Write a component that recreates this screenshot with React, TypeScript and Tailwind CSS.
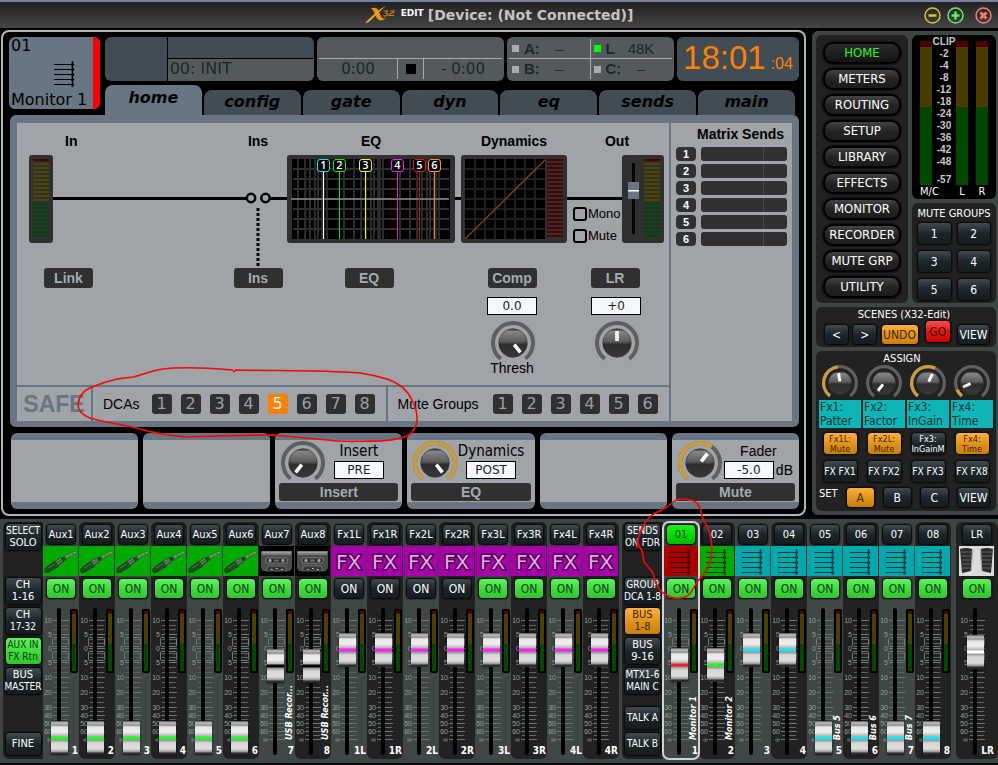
import React, { useId, useState } from 'react';
import clsx from 'clsx';

type Tone = 'dark' | 'green' | 'lime' | 'amber' | 'red';
type Icon = 'jack' | 'tape' | 'fx' | 'bus' | 'speakers';

interface Channel {
    name: string;
    icon: Icon;
    iconBg: string;
    on: boolean;
    level: number;
    tint: string;
    foot: string;
    label?: string;
    selected?: boolean;
}

const tones: Record<Tone, string> = {
    dark: 'from-[#414b50] via-[#1c2529] to-[#141c1f] text-white',
    green: 'from-[#5df45d] via-[#40dc40] to-[#2fc52f] text-[#0c3a0c]',
    lime: 'from-[#1af01a] via-[#00e000] to-[#00b800] text-[#063806]',
    amber: 'from-[#ffb13d] via-[#e29419] to-[#c97f0c] text-[#3b2703]',
    red: 'from-[#ff4a4a] via-[#e01414] to-[#c40808] text-[#3d0000]',
};

interface KeyProps {
    tone?: Tone;
    className?: string;
    children: React.ReactNode;
}

const Key = ({ tone = 'dark', className, children }: KeyProps) => (
    <button
        type="button"
        className={clsx(
            'flex flex-col items-center justify-center rounded-[4px] border border-[#0a0c0c] bg-linear-to-b whitespace-nowrap shadow-[0_0_2px_#000]',
            tones[tone],
            className
        )}
    >
        {children}
    </button>
);

const polar = (angle: number, r: number) => {
    const a = (angle * Math.PI) / 180;
    return [22 + r * Math.sin(a), 22 - r * Math.cos(a)];
};

const arc = (from: number, to: number) => {
    const [x1, y1] = polar(from, 20);
    const [x2, y2] = polar(to, 20);
    return `M${x1} ${y1}A20 20 0 ${to - from > 180 ? 1 : 0} 1 ${x2} ${y2}`;
};

const Knob = ({ label, angle, fill, size = 44 }: { label: string; angle: number; fill?: number; size?: number }) => {
    const id = useId();
    const [x1, y1] = polar(angle, 2);
    const [x2, y2] = polar(angle, 12);
    return (
        <svg width={size} height={size} viewBox="0 0 44 44" role="img" aria-label={label} className="shrink-0">
            <defs>
                <linearGradient id={id} x1="0" y1="0" x2="0" y2="1">
                    <stop offset="0" stopColor="#2c2c2c" />
                    <stop offset=".1" stopColor="#858585" />
                    <stop offset=".45" stopColor="#5c5c5c" />
                    <stop offset=".55" stopColor="#2e2e2e" />
                    <stop offset="1" stopColor="#383838" />
                </linearGradient>
            </defs>
            <path d={arc(-142, 142)} fill="none" stroke="#5f5f5f" strokeWidth="4" />
            {fill !== undefined && <path d={arc(-142, fill)} fill="none" stroke="#ca9c3c" strokeWidth="4" />}
            <circle cx="22" cy="22" r="14.3" fill={`url(#${id})`} stroke="#303030" strokeWidth=".6" />
            <line x1={x1} y1={y1} x2={x2} y2={y2} stroke="#fff" strokeWidth="3.6" />
        </svg>
    );
};

const BusLines = ({ className }: { className?: string }) => (
    <svg width="26" height="30" viewBox="0 0 26 30" className={className} aria-hidden="true">
        <path d="M2 6.5H21M2 11.5H21M2 16.5H21M2 21.5H21M2 26.5H21" stroke="currentColor" strokeWidth="1" />
        <path d="M20.5 3V29" stroke="currentColor" strokeWidth="1.4" />
        {[6.5, 11.5, 16.5, 21.5, 26.5].map((y) => <circle key={y} cx="20.5" cy={y} r="1.6" fill="currentColor" />)}
    </svg>
);

const Picture = ({ icon }: { icon: Icon }) => {
    if (icon === 'bus') return <BusLines />;
    if (icon === 'jack') {
        return (
            <svg width="35" height="30" viewBox="0 0 35 30" aria-hidden="true">
                <path d="M2 26c-1-2 0-4 3-6l7-5 4 5-8 5c-3 2-5 2-6 1z" fill="#1d4a22" stroke="#14380f" strokeWidth=".6" />
                <path d="M12 15l6-4 3 5-6 4z" fill="#39543a" />
                <path d="M13 16l5-3M14 18l6-4" stroke="#93a896" strokeWidth=".8" />
                <path d="M18 12l5-2 1 3-4 3z" fill="#20402a" />
                <path d="M22 12l11-6" stroke="#4a6a4c" strokeWidth="3" />
                <path d="M23 11l10-5" stroke="#a8b5a4" strokeWidth="1" strokeDasharray="3 1" />
                <path d="M5 22l7-4" stroke="#52795a" strokeWidth="1" />
            </svg>
        );
    }
    if (icon === 'tape') {
        return (
            <svg width="35" height="30" viewBox="0 0 35 30" aria-hidden="true">
                <path d="M2 5h31v17l-2 3H4l-2-3z" fill="#4c4c4c" />
                <rect x="2.5" y="5" width="30" height="4" rx="1" fill="#7d7d7d" />
                <path d="M3 6.5h29" stroke="#a8a8a8" strokeWidth=".8" />
                <rect x="7" y="12" width="21" height="5" rx="1" fill="#262626" stroke="#8b8b8b" strokeWidth=".8" />
                <circle cx="11" cy="14.5" r="1.7" fill="#999" />
                <circle cx="24" cy="14.5" r="1.7" fill="#999" />
                <path d="M15 14.5h5" stroke="#6d6d6d" strokeWidth="2" />
                <path d="M7 25l2-5h17l2 5z" fill="#363636" stroke="#7d7d7d" strokeWidth=".7" />
                <path d="M12 23.5h1.5M17 22.5h1.5M22 23.5h1.5" stroke="#c9c9c9" strokeWidth="1.2" />
            </svg>
        );
    }
    if (icon === 'fx') {
        return (
            <svg width="35" height="30" viewBox="0 0 35 30">
                <text
                    x="17.5"
                    y="23"
                    textAnchor="middle"
                    fontFamily="DejaVu Sans, sans-serif"
                    fontSize="20"
                    fill="#e9a8ea"
                    stroke="#4c0650"
                    strokeWidth="3"
                    paintOrder="stroke"
                >
                    FX
                </text>
            </svg>
        );
    }
    return (
        <svg width="35" height="30" viewBox="0 0 35 30" aria-hidden="true">
            <path d="M1 3q6-2 12 0l-1 22-9 2z" fill="#2c2c2c" />
            <path d="M34 3q-6-2-12 0l1 22 9 2z" fill="#2c2c2c" />
            <path d="M2 6h11M2 10h11M3 14h9M3 18h9M3 22h9M22 6h11M22 10h11M23 14h9M23 18h9M23 22h9" stroke="#707070" strokeWidth=".8" />
            <path d="M13 3l1 1-2 21M22 3l-1 1 2 21" fill="none" stroke="#999" strokeWidth=".8" />
        </svg>
    );
};

const scaleMarks: [string, number][] = [
    ['10', 13], ['5', 27], ['0', 41], ['5', 55], ['10', 70], ['20', 85],
    ['30', 100], ['40', 108], ['50', 116], ['60', 124], ['∞', 132],
];

const minorTicks = [18, 22, 32, 36, 46, 50, 60, 65, 75, 80, 90, 95, 104, 112, 120, 128];

const FaderScale = () => (
    <svg width="28" height="148" viewBox="0 0 28 148" className="col-start-1 row-start-1">
        {scaleMarks.map(([text, y], i) => (
            <g key={i}>
                <text x="9" y={y + 2} textAnchor="end" fontFamily="Liberation Sans, sans-serif" fontSize="7" fill="#93a19b">{text}</text>
                <path d={`M10 ${y - 0.5}H26`} stroke="#6c7a74" />
            </g>
        ))}
        {minorTicks.map((y) => <path key={y} d={`M11 ${y - 0.5}H25`} stroke="#59665f" />)}
        <rect x="9.5" y="29.5" width="16" height="9" rx="1" fill="none" stroke="#6c7a74" />
        <rect x="9.5" y="43.5" width="16" height="9" rx="1" fill="none" stroke="#6c7a74" />
        <rect x="14" y="0" width="4" height="147" rx="2" fill="#000" />
    </svg>
);

const Strip = ({ channel, shade, className }: { channel: Channel; shade: string; className?: string }) => {
    const [level, setLevel] = useState(channel.level);
    const [on, setOn] = useState(channel.on);
    return (
        <section
            className={clsx(
                'flex min-w-0 flex-1 flex-col items-center rounded-md pt-[2px] pb-[3px]',
                shade,
                channel.selected && 'relative z-10 outline-2 -outline-offset-1 outline-[#cfd2d2]',
                className
            )}
        >
            <Key tone={channel.selected ? 'lime' : 'dark'} className="h-[21px] w-[30px] text-[11px] leading-[12px]">{channel.name}</Key>
            <div className={clsx('mt-px mr-px flex h-[30px] w-[35px] items-center justify-center', channel.iconBg)}>
                <Picture icon={channel.icon} />
            </div>
            <button
                type="button"
                onClick={() => setOn(!on)}
                className={clsx(
                    'mt-[2px] h-[21px] w-[30px] rounded-[4px] border border-[#0a0c0c] bg-linear-to-b text-[12px] leading-[12px] shadow-[0_0_2px_#000]',
                    on ? tones.green : tones.dark
                )}
            >
                ON
            </button>
            <div className="mt-[9px] grid h-[148px] w-[36px] grid-cols-1">
                <FaderScale />
                <input
                    type="range"
                    aria-label={`${channel.name} level`}
                    value={level}
                    onChange={(e) => setLevel(Number(e.target.value))}
                    className={clsx(
                        'col-start-1 row-start-1 ml-[8px] h-[147px] w-[17px] appearance-none bg-transparent [direction:rtl] [writing-mode:vertical-lr]',
                        '[&::-webkit-slider-thumb]:h-[34px] [&::-webkit-slider-thumb]:w-[17px] [&::-webkit-slider-thumb]:appearance-none [&::-webkit-slider-thumb]:rounded-[1px]',
                        '[&::-webkit-slider-thumb]:shadow-[0_0_2px_#000]',
                        '[&::-webkit-slider-thumb]:bg-[linear-gradient(to_bottom,#555_0,#c4c4c4_2px,#8c8c8c_4px,#e6e6e6_6px,#efefef_11px,#b4b4b4_15px,currentColor_16px,currentColor_18px,#929292_19px,#d8d8d8_22px,#dcdcdc_28px,#909090_31px,#2a2a2a_32px)]',
                        channel.tint
                    )}
                />
                <div className="col-start-1 row-start-1 mr-px flex w-[9px] flex-col items-center justify-self-end pt-px">
                    {channel.icon !== 'speakers' && (
                        <div className="flex h-[64px] w-[8px] shrink-0 flex-col rounded-[2px] bg-black p-[2px]">
                            <span className="h-[3px] bg-[#5a0000]" />
                            <span className="h-[30px] bg-[#4d3f00]" />
                            <span className="flex-1 bg-[#004a00]" />
                        </div>
                    )}
                    {channel.label && (
                        <span className="mt-auto mb-[16px] rotate-180 text-[9px] leading-[9px] font-bold whitespace-nowrap text-white italic [writing-mode:vertical-rl]">
                            {channel.label}
                        </span>
                    )}
                </div>
                <span className="col-start-1 row-start-1 self-end justify-self-end pr-px text-[10px] leading-[10px] font-bold text-white">
                    {channel.foot}
                </span>
            </div>
        </section>
    );
};

const returns: Channel[] = [
    ...['1', '2', '3', '4', '5', '6'].map((n): Channel => ({
        name: `Aux${n}`, icon: 'jack', iconBg: 'bg-[#00aa00]', on: true, level: 0, tint: 'text-[#1fff1f]', foot: n,
    })),
    ...['7', '8'].map((n): Channel => ({
        name: `Aux${n}`, icon: 'tape', iconBg: 'bg-black', on: true, level: 64, tint: 'text-black', foot: n, label: 'USB Recor...',
    })),
    ...['1L', '1R', '2L', '2R', '3L', '3R', '4L', '4R'].map((n, i): Channel => ({
        name: `Fx${n}`, icon: 'fx', iconBg: 'bg-[#a800a8]', on: i > 3, level: 78, tint: 'text-[#ff1fff]', foot: n,
    })),
];

const busBase = { icon: 'bus' as Icon, iconBg: 'bg-[#00a8ac] text-[#033c3f]', on: true, tint: 'text-[#18e8f5]' };

const buses: Channel[] = [
    { ...busBase, name: '01', iconBg: 'bg-[#aa0000] text-[#3d0000]', level: 65, tint: 'text-[#ff1c1c]', foot: '1', label: 'Monitor 1', selected: true },
    { ...busBase, name: '02', iconBg: 'bg-[#00aa00] text-[#033a03]', level: 65, tint: 'text-[#1fff1f]', foot: '2', label: 'Monitor 2' },
    { ...busBase, name: '03', level: 78, foot: '3' },
    { ...busBase, name: '04', level: 78, foot: '4' },
    { ...busBase, name: '05', level: 0, foot: '5', label: 'Bus 5' },
    { ...busBase, name: '06', level: 0, foot: '6', label: 'Bus 6' },
    { ...busBase, name: '07', level: 0, foot: '7', label: 'Bus 7' },
    { ...busBase, name: '08', level: 0, foot: '8' },
];

const main: Channel = { name: 'LR', icon: 'speakers', iconBg: 'bg-[#dcdcdc]', on: true, level: 76, tint: 'text-white', foot: 'LR' };

const SideKey = ({ lines, tone, className }: { lines: string[]; tone?: Tone; className?: string }) => (
    <Key tone={tone} className={clsx('w-[37px] text-[11px] leading-[12px]', lines.length > 1 ? 'h-[28px]' : 'h-[24px]', className)}>
        {lines.map((line) => (
            <span key={line} className={line.length > 4 ? 'text-[10px]' : ''}>{line}</span>
        ))}
    </Key>
);

const Console = () => (
    <div className="mt-[3px] flex bg-[#3d4642] pt-[3px] pb-[4px] pl-[3px] font-['DejaVu_Sans_Condensed','Noto_Sans',sans-serif]">
        <div className="flex w-[40px] shrink-0 flex-col items-center rounded-l-md bg-[#222] pt-px pb-[3px]">
            <SideKey lines={['SELECT', 'SOLO']} />
            <SideKey lines={['CH', '1-16']} className="mt-[26px]" />
            <SideKey lines={['CH', '17-32']} className="mt-[2px]" />
            <SideKey lines={['AUX IN', 'FX Rtn']} tone="green" className="mt-[2px]" />
            <SideKey lines={['BUS', 'MASTER']} className="mt-[2px]" />
            <SideKey lines={['FINE']} className="mt-auto" />
        </div>
        <div className="flex min-w-0 flex-[16]">
            {returns.map((c, i) => <Strip key={c.name} channel={c} shade={i % 2 ? 'bg-[#222]' : 'bg-[#3f4844]'} />)}
        </div>
        <div className="ml-[3px] flex w-[41px] shrink-0 flex-col items-center rounded-l-md bg-[#222] pt-px pb-[3px]">
            <SideKey lines={['SENDS', 'ON FDR']} />
            <SideKey lines={['GROUP', 'DCA 1-8']} className="mt-[26px]" />
            <SideKey lines={['BUS', '1-8']} tone="amber" className="mt-[2px]" />
            <SideKey lines={['BUS', '9-16']} className="mt-[2px]" />
            <SideKey lines={['MTX1-6', 'MAIN C']} className="mt-[2px]" />
            <SideKey lines={['TALK A']} className="mt-auto" />
            <SideKey lines={['TALK B']} className="mt-[2px]" />
        </div>
        <div className="flex min-w-0 flex-[8]">
            {buses.map((c, i) => <Strip key={c.name} channel={c} shade={i % 2 ? 'bg-[#222]' : 'bg-[#3f4844]'} />)}
        </div>
        <div className="ml-[5px] flex w-[42px] shrink-0">
            <Strip channel={main} shade="bg-[#222]" />
        </div>
    </div>
);

const TitleBar = () => (
    <header className="grid h-[29px] grid-cols-[1fr_auto_1fr] items-center border-t-2 border-b border-t-[#7482a8] border-b-black bg-linear-to-b from-[#222] to-[#444] font-['DejaVu_Sans',sans-serif]">
        <div />
        <div className="flex items-center gap-1">
            <svg width="32" height="18" viewBox="0 0 32 18" aria-hidden="true">
                <path d="M6 2.5c4-2 7 0 8 3l2 5c1 2 3 3 5 1-3 4-8 4-10-1L9 6C8 4 7 3 6 2.5z" fill="#e8960f" />
                <path d="M21 0C14 3 8 9 0 17c3 0 4-1 6-3C11 9 15 5 21 0z" fill="#f0a524" />
                <path d="M18.500 5h4l-1.500 2q2.500 0 1 2t-3.500.5M25 5h4l-.5 1.500-4 1.500-.5 1.500h5" fill="none" stroke="#c98410" strokeWidth="1.2" />
            </svg>
            <span className="-mt-[4px] text-[9px] leading-[10px] font-bold text-white">EDIT</span>
            <h1 className="text-[14px] leading-[18px] font-bold text-[#c4c4c4]">[Device: (Not Connected)]</h1>
        </div>
        <div className="flex items-center justify-end pr-[6px]">
            <button type="button" aria-label="Minimize" className="mr-[6px] text-[#d8c233]">
                <svg width="17" height="17" viewBox="0 0 17 17" fill="none" stroke="currentColor">
                    <circle cx="8.5" cy="8.5" r="7.5" strokeWidth="1.5" />
                    <path d="M4.5 8.5h8" strokeWidth="2.5" />
                </svg>
            </button>
            <button type="button" aria-label="Maximize" className="mr-[11px] text-[#5fee5f]">
                <svg width="17" height="17" viewBox="0 0 17 17" fill="none" stroke="currentColor">
                    <circle cx="8.5" cy="8.5" r="7.5" strokeWidth="1.5" />
                    <path d="M4.5 8.5h8M8.5 4.5v8" strokeWidth="2.5" />
                </svg>
            </button>
            <button type="button" aria-label="Close" className="text-[#ff7a6c]">
                <svg width="17" height="17" viewBox="0 0 17 17" fill="none" stroke="currentColor">
                    <circle cx="8.5" cy="8.5" r="7.5" strokeWidth="1.5" />
                    <path d="M5.5 5.5l6 6M11.5 5.5l-6 6" strokeWidth="2.8" />
                </svg>
            </button>
        </div>
    </header>
);

const tabs = ['home', 'config', 'gate', 'dyn', 'eq', 'sends', 'main'];

const clockSources = [
    { name: 'A:', value: '–', lit: false },
    { name: 'L', value: '48K', lit: true },
    { name: 'B:', value: '–', lit: false },
    { name: 'C:', value: '–', lit: false },
];

const DeviceHeader = () => (
    <div className="ml-px flex h-[78px] items-start gap-[5px] font-['DejaVu_Sans',sans-serif]">
        <div className="flex h-[72px] w-[91px] shrink-0 overflow-hidden rounded-md bg-[#677682]">
            <div className="flex flex-1 flex-col justify-between pl-[2px] text-[16px] leading-[18px] text-black">
                <span>01</span>
                <BusLines className="ml-[41px]" />
                <span className="whitespace-nowrap">Monitor 1</span>
            </div>
            <div className="w-[7px] shrink-0 bg-[#ff0000]" />
        </div>
        <div className="flex min-w-0 flex-1 flex-col">
            <div className="grid h-[42px] grid-cols-[209fr_187fr_167fr_122fr] gap-[3px] text-[#1b272c]">
                <div className="flex overflow-hidden rounded-md bg-[#414c55]">
                    <div className="w-[30%] border-r border-black" />
                    <div className="flex flex-1 flex-col">
                        <div className="h-[21px]" />
                        <div className="flex-1 border-t border-black bg-[#545a5b] pl-[2px] text-[16px] leading-[20px]">00: INIT</div>
                    </div>
                </div>
                <div className="flex flex-col rounded-md bg-[#545a5b] px-[2px] pb-[2px]">
                    <div className="h-[21px]" />
                    <div className="grid flex-1 grid-cols-[78fr_27fr_78fr] border-t border-[#a9acae] text-center text-[15px] leading-[20px]">
                        <span>0:00</span>
                        <span className="flex items-center justify-center border-x border-[#a9acae]"><span className="size-[10px] bg-black" /></span>
                        <span>- 0:00</span>
                    </div>
                </div>
                <div className="grid grid-cols-2 grid-rows-2 rounded-md bg-[#545a5b] p-[2px] font-['Liberation_Sans',sans-serif] text-[15px] leading-[18px]">
                    {clockSources.map((s, i) => (
                        <div key={s.name} className={clsx('flex items-center border-[#a9acae] pl-[3px]', i < 2 && 'border-b', i % 2 ? '' : 'border-r')}>
                            <span className={clsx('size-[7px]', s.lit ? 'bg-[#00ff00]' : 'bg-[#a9acae]')} />
                            <span className="ml-[5px] w-[22px] font-bold">{s.name}</span>
                            <span className="w-[27px] text-center">{s.value}</span>
                        </div>
                    ))}
                </div>
                <div className="flex items-baseline justify-center gap-[5px] overflow-hidden rounded-md bg-[#414c55] font-['Liberation_Sans',sans-serif] text-[#ff8000]">
                    <span className="text-[33px] leading-[42px]">18:01</span>
                    <span className="text-[16px]">:04</span>
                </div>
            </div>
            <div className="mt-[6px] grid h-[30px] grid-cols-7 items-end gap-[2px] pr-[4px]">
                {tabs.map((tab, i) => (
                    <button
                        key={tab}
                        type="button"
                        className={clsx(
                            'rounded-t-lg text-center text-[16px] font-bold text-black italic',
                            i === 0 ? 'h-[30px] bg-[#677682] pb-[4px]' : 'h-[25px] bg-[#414c55] pb-[2px]'
                        )}
                    >
                        {tab}
                    </button>
                ))}
            </div>
        </div>
    </div>
);

const ledRows = Array.from({ length: 20 }, (_, i) => i);

const LedColumn = ({ x, red }: { x: number; red?: boolean }) => (
    <g>
        {ledRows.map((i) => (
            <rect key={i} x={x} y={4 + i * 4} width="16" height="2" fill={red || i === 0 ? '#520000' : i < 11 ? '#4d4700' : '#00480a'} />
        ))}
    </g>
);

const eqBands = [
    { x: 36, color: '#19e6f0', line: '#ffffff' },
    { x: 52, color: '#12f012', line: '#12e012' },
    { x: 78, color: '#f5f51e', line: '#f5f51e' },
    { x: 110, color: '#ff1aff', line: '#e010e0' },
    { x: 132, color: '#f01414', line: '#c81414' },
    { x: 147, color: '#ff9130', line: '#ff8000' },
];

const eqGrid = [-16, 40, 96].flatMap((start) =>
    [2, 3, 4, 5, 6, 7, 8, 9, 10].map((k) => Math.round(start + 56 * Math.log10(k)))
).filter((x) => x > 5 && x < 162);

const EqGraph = () => (
    <svg width="168" height="88" viewBox="0 0 168 88">
        <rect width="168" height="88" rx="3" fill="#303030" />
        <rect x="5" y="4" width="158" height="80" fill="#000" />
        {[14, 24, 34, 54, 64, 74].map((y) => <path key={y} d={`M6 ${y}H162`} stroke="#303030" strokeWidth="2" />)}
        {eqGrid.map((x) => <path key={x} d={`M${x} 4V84`} stroke="#2b2b2b" strokeWidth="2" />)}
        <path d="M4 44H162" stroke="#707070" strokeWidth="2" />
        {eqBands.map((b, i) => (
            <g key={b.x}>
                <path d={`M${b.x + 0.5} 16V84`} stroke={b.line} />
                <rect x={b.x - 5.5} y="4.5" width="12" height="12" rx="2.5" fill="#000" stroke={b.color} />
                <text x={b.x + 0.5} y="14" textAnchor="middle" fontFamily="Open Sans, sans-serif" fontSize="11" fontWeight="600" fill="#fff">{i + 1}</text>
            </g>
        ))}
    </svg>
);

const DynGraph = () => (
    <svg width="106" height="88" viewBox="0 0 106 88" aria-hidden="true">
        <rect width="106" height="88" rx="3" fill="#303030" />
        <rect x="4" y="4" width="80" height="80" fill="#000" />
        {[14, 24, 34, 44, 54, 64, 74].map((n) => (
            <path key={n} d={`M4 ${n}H84M${n} 4V84`} stroke="#1e1e1e" strokeWidth="2" />
        ))}
        <path d="M4 84L84 5" stroke="#8c4600" strokeWidth="1.3" />
        <LedColumn x={86} red />
    </svg>
);

const Field = ({ label, value }: { label: string; value: string }) => (
    <input
        type="text"
        aria-label={label}
        defaultValue={value}
        className="block h-[18px] w-[50px] border border-black bg-[#f4f8fb] text-center font-['DejaVu_Sans',sans-serif] text-[12px] leading-[16px] text-[#222]"
    />
);

const Plate = ({ children }: { children: React.ReactNode }) => (
    <button type="button" className="block h-[20px] w-[49px] rounded-[3px] bg-[#303030] text-[14px] leading-[20px] font-bold text-[#a0acb2]">
        {children}
    </button>
);

const StageLabel = ({ children }: { children: React.ReactNode }) => (
    <h2 className="h-[32px] pt-[10px] text-[14px] leading-[16px] font-bold text-black">{children}</h2>
);

const SignalPath = () => (
    <div className="flex min-h-[262px] pr-[2px] pl-[12px]">
        <div className="min-w-0 flex-1">
            <div className="pl-[36px]"><StageLabel>In</StageLabel></div>
            <div className="flex h-[88px] items-start">
                <svg width="24" height="88" viewBox="0 0 24 88" aria-hidden="true">
                    <rect width="24" height="88" rx="3" fill="#303030" />
                    <LedColumn x={4} />
                </svg>
                <div className="mt-[42px] h-[3px] flex-1 bg-black" />
            </div>
            <div className="mt-[25px] pl-[15px]"><Plate>Link</Plate></div>
        </div>
        <div className="flex w-[58px] flex-col items-center">
            <StageLabel>Ins</StageLabel>
            <svg width="58" height="113" viewBox="0 0 58 113" aria-hidden="true">
                <path d="M0 43.5H17M41 43.5H58" stroke="#000" strokeWidth="3" />
                <circle cx="22" cy="43" r="4.2" fill="none" stroke="#000" strokeWidth="2.5" />
                <circle cx="36.5" cy="43" r="4.2" fill="none" stroke="#000" strokeWidth="2.5" />
                <path d="M29 53V111" stroke="#000" strokeWidth="3" strokeDasharray="3 2" />
            </svg>
            <Plate>Ins</Plate>
        </div>
        <div className="flex w-[168px] flex-col items-center">
            <StageLabel>EQ</StageLabel>
            <EqGraph />
            <div className="mt-[25px] pr-1"><Plate>EQ</Plate></div>
        </div>
        <div className="mt-[74px] h-[3px] w-[6px] bg-black" />
        <div className="flex w-[106px] flex-col items-center">
            <StageLabel>Dynamics</StageLabel>
            <DynGraph />
            <div className="mt-[25px] mb-[9px] pr-1"><Plate>Comp</Plate></div>
            <div className="pr-1"><Field label="Threshold" value="0.0" /></div>
            <div className="mt-[6px] h-[39px] pr-[2px]"><Knob label="Thresh" angle={142} /></div>
            <span className="pr-[4px] text-[14px] leading-[16px] text-black">Thresh</span>
        </div>
        <div className="flex w-[100px] flex-col items-center">
            <StageLabel>Out</StageLabel>
            <div className="flex h-[88px] w-full pr-[3px]">
                <div className="flex-1">
                    <div className="mt-[42px] h-[3px] bg-black" />
                    <label className="mt-[6px] ml-[6px] flex items-center text-[13px] leading-[16px] text-black">
                        <input type="checkbox" className="size-[14px] shrink-0 appearance-none rounded-[3px] border-2 border-black" />
                        <span className="ml-px">Mono</span>
                    </label>
                    <label className="mt-[6px] ml-[6px] flex items-center text-[13px] leading-[16px] text-black">
                        <input type="checkbox" className="size-[14px] shrink-0 appearance-none rounded-[3px] border-2 border-black" />
                        <span className="ml-px">Mute</span>
                    </label>
                </div>
                <svg width="42" height="88" viewBox="0 0 42 88" aria-hidden="true">
                    <rect width="42" height="88" rx="3" fill="#303030" />
                    <rect x="10" y="8" width="3" height="71" fill="#000" />
                    <rect x="6" y="27" width="11" height="17" fill="#677682" />
                    <rect x="6" y="35" width="11" height="1.5" fill="#fff" />
                    <LedColumn x={22} />
                </svg>
            </div>
            <div className="mt-[25px] mb-[9px] pr-1"><Plate>LR</Plate></div>
            <div className="pr-[2px]"><Field label="Pan" value="+0" /></div>
            <div className="mt-[6px]"><Knob label="Pan" angle={0} /></div>
        </div>
    </div>
);

const SafeKeys = ({ count, active }: { count: number; active?: number }) => (
    <div className="flex gap-[9px]">
        {Array.from({ length: count }, (_, i) => i + 1).map((n) => (
            <button
                key={n}
                type="button"
                className={clsx(
                    "size-[20px] rounded-[3px] font-['DejaVu_Sans',sans-serif] text-[16px] leading-[20px]",
                    n === active ? 'bg-[#ff8000] text-white' : 'bg-[#303030] text-[#94a1a7]'
                )}
            >
                {n}
            </button>
        ))}
    </div>
);

const MatrixSends = () => (
    <div className="w-[123px] shrink-0 border-l-2 border-[#677682] px-[5px]">
        <h2 className="pt-[3px] pb-[5px] pl-[21px] text-[14px] leading-[16px] font-bold whitespace-nowrap text-black">Matrix Sends</h2>
        <div className="flex flex-col gap-[3px]">
            {[1, 2, 3, 4, 5, 6].map((n) => (
                <div key={n} className="flex gap-[5px]">
                    <button type="button" className="h-[14px] w-[20px] rounded-[4px] bg-[#303030] text-[11px] leading-[14px] font-bold text-white">{n}</button>
                    <div className="flex h-[14px] flex-1 rounded-[3px] bg-[#303030]">
                        <span className="ml-auto h-full w-[24px] border-l border-[#4a4a4a]" />
                    </div>
                </div>
            ))}
        </div>
    </div>
);

interface CardProps {
    title?: string;
    value?: string;
    unit?: string;
    bar?: string;
    angle?: number;
    fill?: number;
}

const cards: CardProps[] = [
    {},
    {},
    { title: 'Insert', value: 'PRE', bar: 'Insert', angle: -142 },
    { title: 'Dynamics', value: 'POST', bar: 'EQ', angle: 142, fill: 142 },
    {},
    { title: 'Fader', value: '-5.0', unit: 'dB', bar: 'Mute', angle: 38, fill: 36 },
];

const EncoderCard = ({ title, value, unit, bar, angle, fill }: CardProps) => (
    <div className="h-[76px] overflow-hidden rounded-md border-y-[7px] border-[#677682] bg-[#a0a3a7]">
        {title && (
            <div className="flex h-full flex-col px-[4px] pb-[1px]">
                <div className="flex h-[42px] pt-px pl-[2px]">
                    <Knob label={title} angle={angle ?? 0} fill={fill} />
                    <div className={clsx('flex flex-1 flex-col items-center', !unit && 'pr-[6px]')}>
                        <span className={clsx('leading-[20px] text-black', unit ? 'text-[14px]' : "font-['DejaVu_Sans_Condensed','Noto_Sans',sans-serif] text-[15px]")}>{title}</span>
                        <span className="flex h-[18px] items-center gap-[2px] text-[14px] leading-[18px] text-black">
                            <Field label={title} value={value ?? ''} />
                            {unit}
                        </span>
                    </div>
                </div>
                <button type="button" className="relative mt-auto h-[18px] w-full rounded-[3px] bg-[#303030] text-[14px] leading-[18px] font-bold text-[#a0acb2]">
                    {bar}
                </button>
            </div>
        )}
    </div>
);

const Device = () => (
    <main className="mt-px ml-px min-w-0 flex-1 rounded-lg border-2 border-[#b3b6b9] bg-black px-[5px] py-[5px] font-['Liberation_Sans',sans-serif]">
        <DeviceHeader />
        <div className="ml-[2px] rounded-md bg-[#677682] px-[7px] pt-[8px] pb-[6px]">
            <div className="flex bg-[#a0a3a7]">
                <div className="min-w-0 flex-1">
                    <SignalPath />
                    <div className="flex h-[36px] items-center border-t-2 border-[#677682] text-[14px] text-black">
                        <span className="flex h-full w-[76px] items-center justify-center border-r-2 border-[#677682] text-[23px] font-bold text-[#677682]">SAFE</span>
                        <span className="mr-[12px] ml-[10px]">DCAs</span>
                        <SafeKeys count={8} active={5} />
                        <span className="mr-[10px] ml-[11px] h-full w-[2px] bg-[#677682]" />
                        <span className="mr-[14px] whitespace-nowrap">Mute Groups</span>
                        <SafeKeys count={6} />
                    </div>
                </div>
                <MatrixSends />
            </div>
        </div>
        <div className="mt-[6px] ml-[3px] grid grid-cols-6 gap-[5px]">
            {cards.map((c, i) => <EncoderCard key={i} {...c} />)}
        </div>
    </main>
);

const pages = ['HOME', 'METERS', 'ROUTING', 'SETUP', 'LIBRARY', 'EFFECTS', 'MONITOR', 'RECORDER', 'MUTE GRP', 'UTILITY'];
const meterScale = ['CLIP', '-2', '-4', '-8', '-12', '-18', '-24', '-30', '-36', '-42', '-48'];

const MainMeter = () => (
    <div className="flex h-[144px] w-[12px] flex-col">
        <span className="h-[6px] bg-[#4c0000]" />
        <span className="h-[60px] bg-[#483c00]" />
        <span className="flex-1 bg-[#004700]" />
    </div>
);

const assigns = [
    { fx: 'Fx1:', param: 'Patter', angle: -8, fill: -8, key: ['Fx1L:', 'Mute'], lit: true, page: 'FX FX1' },
    { fx: 'Fx2:', param: 'Factor', angle: -142, key: ['Fx2L:', 'Mute'], lit: true, page: 'FX FX2' },
    { fx: 'Fx3:', param: 'InGain', angle: 26, fill: 26, key: ['Fx3:', 'InGainM'], lit: false, page: 'FX FX3' },
    { fx: 'Fx4:', param: 'Time', angle: -114, fill: -114, key: ['Fx4:', 'Time'], lit: true, page: 'FX FX8' },
];

const Sidebar = () => (
    <aside className="mt-[2px] ml-[6px] flex w-[186px] shrink-0 flex-col gap-[4px] rounded-l-md bg-[#3d4642] py-[4px] pr-[2px] pl-[4px] font-['DejaVu_Sans_Condensed','Noto_Sans',sans-serif] text-white">
        <div className="flex gap-[4px]">
            <nav className="flex w-[92px] shrink-0 flex-col items-center gap-[4px] rounded-md bg-[#222] pt-[7px]">
                {pages.map((page, i) => (
                    <button
                        key={page}
                        type="button"
                        className={clsx(
                            'h-[22px] w-[78px] rounded-[10px] border-2 border-black bg-linear-to-b text-[13px] leading-[18px] whitespace-nowrap shadow-[0_0_1px_1px_#111]',
                            i === 0 ? 'from-[#2b2b2b] to-[#141414] text-[#2df52d]' : 'from-[#444] via-[#242424] to-[#1c1c1c]'
                        )}
                    >
                        {page}
                    </button>
                ))}
            </nav>
            <div className="flex min-w-0 flex-1 flex-col gap-[4px]">
                <div className="grid h-[164px] grid-cols-[12px_24px_12px_1fr] grid-rows-[145px_12px] rounded-md bg-black px-[8px] pt-[6px]">
                    <MainMeter />
                    <div className="-mt-[5px] flex flex-col items-center font-['Liberation_Sans',sans-serif] text-[10px] leading-[12px] font-bold text-[#c8c8c8]">
                        {meterScale.map((m) => <span key={m}>{m}</span>)}
                        <span className="mt-[6px]">-57</span>
                    </div>
                    <MainMeter />
                    <div className="justify-self-end"><MainMeter /></div>
                    <span className="col-span-2 text-[11px] leading-[12px]">M/C</span>
                    <span className="text-center text-[11px] leading-[12px]">L</span>
                    <span className="w-[12px] justify-self-end text-center text-[11px] leading-[12px]">R</span>
                </div>
                <div className="h-[100px] rounded-md bg-[#222] px-[5px] pt-[3px] text-center">
                    <h2 className="text-[11px] leading-[16px] whitespace-nowrap">MUTE GROUPS</h2>
                    <div className="grid grid-cols-2 gap-[5px]">
                        {[1, 2, 3, 4, 5, 6].map((n) => <Key key={n} className="h-[23px] text-[12px]">{n}</Key>)}
                    </div>
                </div>
            </div>
        </div>
        <div className="h-[40px] rounded-md bg-[#222] pt-px">
            <h2 className="pr-[4px] text-center text-[11px] leading-[13px]">SCENES (X32-Edit)</h2>
            <div className="flex items-end justify-between pr-[6px] pl-[8px] text-[12px] leading-[14px]">
                <Key className="h-[21px] w-[25px]">&lt;</Key>
                <Key className="h-[21px] w-[25px]">&gt;</Key>
                <Key tone="amber" className="h-[21px] w-[38px]">UNDO</Key>
                <Key tone="red" className="mx-[3px] -mt-px mb-[2px] h-[23px] w-[26px]">GO</Key>
                <Key className="h-[21px] w-[33px]">VIEW</Key>
            </div>
        </div>
        <div className="h-[160px] rounded-md bg-[#222] px-[3px] pt-px">
            <h2 className="pr-[8px] text-center text-[11px] leading-[13px]">ASSIGN</h2>
            <div className="grid grid-cols-4 gap-x-[2px]">
                {assigns.map((a) => (
                    <div key={a.fx} className="flex flex-col items-center">
                        <div className="h-[35px]"><Knob label={`${a.fx} ${a.param}`} angle={a.angle} fill={a.fill} size={36} /></div>
                        <div className="relative h-[28px] w-full bg-[#0eb4b6] pl-px text-[12px] leading-[14px] text-[#073234]">
                            <div>{a.fx}</div>
                            <div>{a.param}</div>
                        </div>
                        <Key tone={a.lit ? 'amber' : 'dark'} className="mt-[4px] h-[23px] w-[35px] text-[9px] leading-[10px]">
                            {a.key.map((line) => <span key={line}>{line}</span>)}
                        </Key>
                        <Key className="mt-[5px] h-[23px] w-[35px] text-[10px] leading-[12px]">{a.page}</Key>
                    </div>
                ))}
            </div>
            <div className="mt-[4px] flex items-center justify-between pr-[3px] text-[12px] leading-[14px]">
                <span className="self-start text-[11px]">SET</span>
                <Key tone="amber" className="h-[21px] w-[29px]">A</Key>
                <Key className="h-[21px] w-[29px]">B</Key>
                <Key className="h-[21px] w-[29px]">C</Key>
                <Key className="h-[21px] w-[33px]">VIEW</Key>
            </div>
        </div>
    </aside>
);

// Hand-drawn red circles laid over the mixer
const Markup = () => (
    <svg width="998" height="765" viewBox="0 0 998 765" className="pointer-events-none absolute top-0 left-0 z-20" fill="none" stroke="#f90606" strokeWidth="1.6" strokeLinejoin="round" aria-hidden="true">
        <path d="M233 372L236 370C280 371 320 370 360 373Q374 375 387 379Q405 385 412 400Q418 412 417 421Q415 432 407 436Q390 442 370 441Q340 442 327 440L273 435Q230 435 187 437Q165 435 147 431C130 425 110 424 90 418Q78 413 78 405Q79 392 92 387Q104 382 117 379L133 377C142 375 150 371 163 369Q185 366 233 370" />
        <path d="M637 548Q638 534 643 527Q645 521 652 515L667 507L672 503Q676 499 682 499Q692 499 697 503L701 510L702 517L707 526Q714 543 711 559Q707 572 697 582Q690 596 685 597Q674 601 663 593Q655 586 653 573Q650 569 644 562Q643 556 642 551Q638 545 637 540" />
    </svg>
);

const App: React.FC = () => {
    return (
        <div className="relative min-h-screen overflow-hidden bg-[#05070c]">
            <TitleBar />
            <div className="flex items-start bg-black">
                <Device />
                <Sidebar />
            </div>
            <Console />
            <Markup />
        </div>
    );
};

export default App;
